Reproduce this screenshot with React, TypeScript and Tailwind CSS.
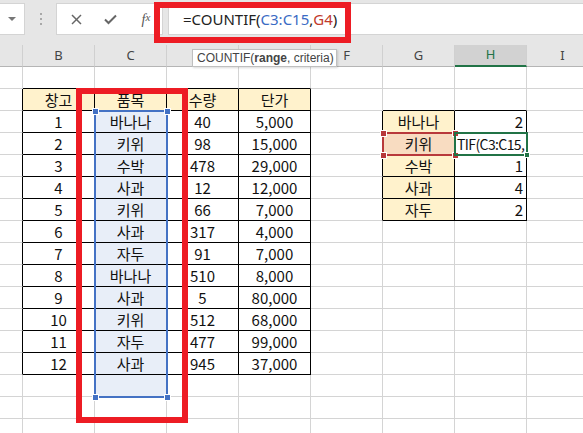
import React from 'react';

type Cell = { text: React.ReactNode; align?: 'center' | 'right' | 'left'; bg?: string };

const COLS = ['', 'B', 'C', 'D', 'E', 'F', 'G', 'H', 'I'];
const ROW_COUNT = 17;

const items = ['바나나', '키위', '수박', '사과', '키위', '사과', '자두', '바나나', '사과', '키위', '자두', '사과'];
const qty = ['40', '98', '478', '12', '66', '317', '91', '510', '5', '512', '477', '945'];
const price = ['5,000', '15,000', '29,000', '12,000', '7,000', '4,000', '7,000', '8,000', '80,000', '68,000', '99,000', '37,000'];

const summary: [string, string][] = [
  ['바나나', '2'],
  ['키위', ''],
  ['수박', '1'],
  ['사과', '4'],
  ['자두', '2'],
];

// cells keyed by "col,row" (col index into COLS, sheet row number)
const cells: Record<string, Cell> = {};
cells['1,2'] = { text: '창고', bg: 'yellow' };
cells['2,2'] = { text: '품목', bg: 'yellow' };
cells['3,2'] = { text: '수량', bg: 'yellow' };
cells['4,2'] = { text: '단가', bg: 'yellow' };
items.forEach((it, i) => {
  const r = i + 3;
  cells[`1,${r}`] = { text: String(i + 1) };
  cells[`2,${r}`] = { text: it };
  cells[`3,${r}`] = { text: qty[i] };
  cells[`4,${r}`] = { text: price[i] };
});
summary.forEach(([name, n], i) => {
  const r = i + 3;
  cells[`6,${r}`] = { text: name, bg: r === 4 ? 'peach' : 'yellow' };
  cells[`7,${r}`] = { text: n, align: 'right' };
});

function inTable(c: number, r: number) {
  if (c >= 1 && c <= 4 && r >= 2 && r <= 14) return true;
  if (c >= 6 && c <= 7 && r >= 3 && r <= 7) return true;
  return false;
}

function inSelection(c: number, r: number) {
  return c === 2 && r >= 3 && r <= 15;
}

function SheetCell({ c, r }: { c: number; r: number }) {
  const cell = cells[`${c},${r}`];
  const right = inTable(c, r) || inTable(c + 1, r);
  const bottom = inTable(c, r) || inTable(c, r + 1);
  let bg = 'bg-white';
  if (cell?.bg === 'yellow') bg = 'bg-[#fff2cc]';
  if (cell?.bg === 'peach') bg = 'bg-[#f8dcc1]';
  if (inSelection(c, r)) bg = 'bg-[#e8eef8]';

  return (
    <div
      className={`flex items-center overflow-hidden border-r border-b ${right ? 'border-r-black' : 'border-r-[#d4d4d4]'} ${
        bottom ? 'border-b-black' : 'border-b-[#d4d4d4]'
      } ${bg} ${cell?.align === 'right' ? 'justify-end pr-[3px]' : 'justify-center'}`}
    >
      {c === 7 && r === 4 ? (
        // cell in edit mode, the formula scrolled so only its middle shows
        <span className="w-full whitespace-nowrap pl-[2px] text-[14px] leading-none tracking-[-0.6px] text-[#111]">TIF(C3:C15,</span>
      ) : (
        <span className="whitespace-nowrap text-[15px] leading-none text-[#111]">{cell?.text}</span>
      )}
    </div>
  );
}

function FormulaBar() {
  return (
    <div className="flex h-[45px] items-start bg-[#e6e6e6] pt-[3px]">
      <div className="flex h-[32px] w-[25px] items-center justify-center border border-l-0 border-[#d4d4d4] bg-white">
        <div className="h-0 w-0 border-x-[4px] border-t-[4px] border-x-transparent border-t-[#777]" />
      </div>
      <div className="flex h-[32px] w-[31px] flex-col items-center justify-center gap-[3px]">
        <div className="h-[2px] w-[2px] bg-[#a8a8a8]" />
        <div className="h-[2px] w-[2px] bg-[#a8a8a8]" />
        <div className="h-[2px] w-[2px] bg-[#a8a8a8]" />
      </div>
      <div className="flex h-[32px] w-[107px] items-center border border-[#d4d4d4] bg-white">
        <div className="flex w-[36px] justify-center pl-[2px]">
          <svg width="11" height="11" viewBox="0 0 11 11" stroke="#666" strokeWidth="1.5">
            <line x1="1" y1="1" x2="10" y2="10" />
            <line x1="10" y1="1" x2="1" y2="10" />
          </svg>
        </div>
        <div className="flex w-[34px] justify-center">
          <svg width="13" height="11" viewBox="0 0 13 11" fill="none" stroke="#666" strokeWidth="2">
            <polyline points="1,5.5 4.5,9 12,1.5" />
          </svg>
        </div>
        <div className="flex w-[34px] justify-center pl-[4px] font-['Liberation_Serif',serif] text-[14px] italic text-[#555]">
          f<span className="text-[11px]">x</span>
        </div>
      </div>
      <div className="ml-[5px] flex h-[32px] flex-1 items-center border border-r-0 border-[#d4d4d4] bg-white pl-[14px] font-['Noto_Sans',sans-serif] text-[15px] text-[#222]">
        =COUNTIF(<span className="text-[#3a6bc4]">C3:C15</span>,<span className="text-[#c0392b]">G4</span>)
      </div>
    </div>
  );
}

function Sheet() {
  const rows = Array.from({ length: ROW_COUNT }, (_, i) => i + 1);
  return (
    <div className="grid grid-cols-[23px_repeat(8,72px)] auto-rows-[22px] font-['Noto_Sans_CJK_KR',sans-serif]">
      {COLS.map((col, c) => (
        <div
          key={`h${c}`}
          className={`flex items-center justify-center border-r border-r-[#d0d0d0] font-['Noto_Sans',sans-serif] text-[13px] ${
            col === 'H'
              ? 'border-b-2 border-b-[#217346] bg-[#d2d2d2] text-[#217346]'
              : 'border-b border-b-[#b5b5b5] bg-[#e6e6e6] text-[#444]'
          }`}
        >
          {col}
        </div>
      ))}
      {rows.map((r) => COLS.map((_, c) => <SheetCell key={`${c},${r}`} c={c} r={r} />))}
    </div>
  );
}

function Handle({ x, y, color }: { x: number; y: number; color: string }) {
  return (
    <div
      className="absolute h-[7px] w-[7px] border border-white"
      style={{ left: x - 3, top: y - 3, background: color }}
    />
  );
}

export default function App() {
  return (
    <div className="relative h-[433px] w-[583px] overflow-hidden bg-white">
      <FormulaBar />
      <Sheet />

      {/* selected range C3:C15 */}
      <div className="absolute left-[94px] top-[110px] h-[288px] w-[74px] border-2 border-[#4472c4]" />
      <Handle x={95} y={111} color="#4472c4" />
      <Handle x={167} y={111} color="#4472c4" />
      <Handle x={95} y={397} color="#4472c4" />
      <Handle x={167} y={397} color="#4472c4" />

      {/* criteria cell G4 */}
      <div className="absolute left-[382px] top-[132px] h-[24px] w-[74px] border-2 border-[#b8393b]" />
      <Handle x={383} y={133} color="#b8393b" />
      <Handle x={455} y={133} color="#b8393b" />
      <Handle x={383} y={155} color="#b8393b" />
      <Handle x={455} y={155} color="#b8393b" />

      {/* active cell H4 */}
      <div className="absolute left-[454px] top-[132px] h-[24px] w-[74px] border-2 border-[#217346]" />
      <div className="absolute left-[524px] top-[152px] h-[6px] w-[6px] border border-white bg-[#217346]" />

      {/* function tooltip */}
      <div className="absolute left-[192px] top-[49px] flex h-[18px] w-[145px] items-center overflow-hidden whitespace-nowrap border border-[#bfbfbf] bg-white pl-[4px] font-['Liberation_Sans',sans-serif] text-[12px] leading-none text-[#444] shadow-[1px_1px_2px_rgba(0,0,0,0.15)]">
        COUNTIF(<b className="font-bold">range</b>, criteria)
      </div>

      {/* red annotations */}
      <div className="absolute left-[154px] top-[2px] h-[41px] w-[197px] border-[6px] border-[#ed1c24]" />
      <div className="absolute left-[76px] top-[88px] h-[335px] w-[112px] border-[6px] border-[#ed1c24]" />
    </div>
  );
}
